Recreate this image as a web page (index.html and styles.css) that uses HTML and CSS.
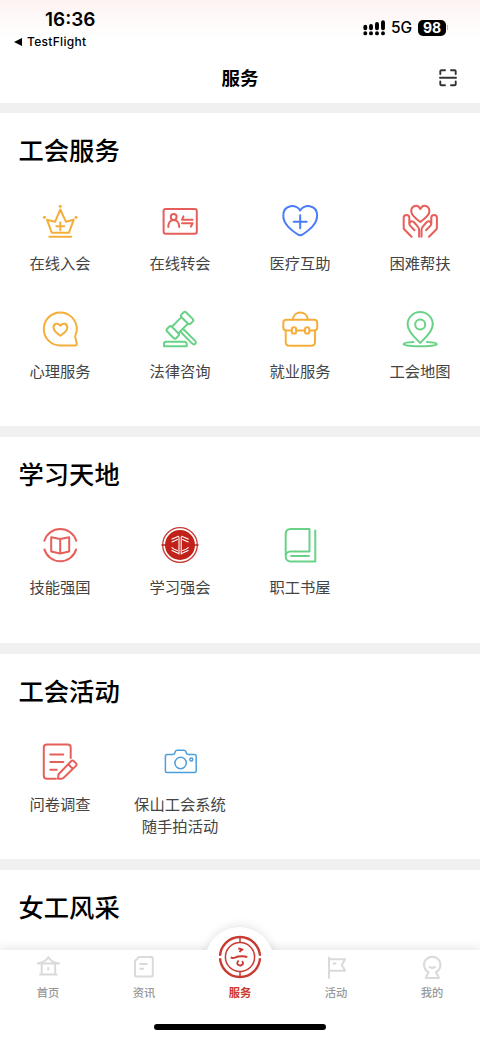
FILE: index.html
```html
<!DOCTYPE html>
<html lang="zh-CN">
<head>
<meta charset="utf-8">
<title>服务</title>
<link rel="stylesheet" href="styles.css">
</head>
<body>
<div class="app">
  <header class="top">
    <div class="status">
      <div class="status-left">
        <div class="clock">16:36</div>
        <div class="back"><svg width="9" height="8" viewBox="0 0 9 8"><path d="M0 4 8 0V8Z"/></svg><span>TestFlight</span></div>
      </div>
      <div class="status-right">
        <svg class="signal" width="24" height="16" viewBox="0 0 24 16" stroke="#000" stroke-width="3.9" stroke-linecap="round"><path d="M2.300 6.700v1.600M8 5.900v2.400M14 3.900v4.400M20 2.300v6M2.300 13.200v.2M8 13.200v.2M14 13.200v.2M20 13.200v.2"/></svg>
        <span class="network">5G</span>
        <span class="battery">98</span><span class="battery-tip"></span>
      </div>
    </div>
    <div class="titlebar">
      <h1>服务</h1>
      <svg class="scan" width="18" height="18" viewBox="0 0 18 18" fill="none" stroke="#333" stroke-width="1.9" stroke-linecap="round" stroke-linejoin="round"><path d="M1.300 5V2.300q0-1 1-1H6M12 1.300h3.700q1 0 1 1V5M1.300 12.500v2.700q0 1 1 1H6M12 16.200h3.700q1 0 1-1v-2.700M1 8.700h16"/></svg>
    </div>
  </header>
  <main class="content">
    <section class="panel">
      <h2>工会服务</h2>
      <div class="grid">
        <div class="item">
          <svg class="icon orange" viewBox="0 0 44 44"><path d="M9 20.700 13.700 33.700H31L35.700 20.700 28 22.800 22.300 10.500 17 22.800ZM11.300 37.700H33.200M22.300 23.300v8M18.300 27.300h8"/><g class="solid"><circle cx="22.300" cy="7.300" r="1.500"/><circle cx="6.400" cy="18.300" r="1.500"/><circle cx="38" cy="18.300" r="1.500"/></g></svg>
          <span>在线入会</span>
        </div>
        <div class="item">
          <svg class="icon red" viewBox="0 0 44 44"><rect x="5.600" y="10" width="33.200" height="24.700" rx="2"/><circle cx="15.700" cy="18" r="2.900"/><path d="M10.300 28c0-4.200 2.200-7 5.400-7s5.500 2.800 5.500 7M34.600 20.700H24l1.500-3.300M24 24.300h10.600l-1.700 3.200"/></svg>
          <span>在线转会</span>
        </div>
        <div class="item">
          <svg class="icon blue" viewBox="0 0 44 44"><path d="M22.200 11.500C19 4.800 5.300 5 5.300 16.800c0 8.500 8 14.200 14.200 18.500q2.700 2 5.400 0C31.100 31 39.100 25.300 39.100 16.800 39.100 5 25.400 4.800 22.200 11.500ZM22.200 16.200v13M15.700 22.700h13"/></svg>
          <span>医疗互助</span>
        </div>
        <div class="item">
          <svg class="icon red" viewBox="0 0 44 44"><path d="M22.300 10C19.800 4.600 13.200 6.600 13.200 12.300c0 4.500 4.700 7.300 9.100 10.600 4.400-3.300 9.100-6.100 9.100-10.600 0-5.700-6.600-7.700-9.100-2.300Z"/><path id="hand" d="M13.600 37.800 6.400 30.500q-.7-.7-.7-1.800V18.500c0-3.500 5.600-3.500 5.600 0v6.200q0 1 .8 1.900l4.400 4.700M11.500 24.300c1-2.600 3-2.600 4.800-.8l3.700 4.400q1.100 1.200 1.100 2.900v7"/><use href="#hand" transform="matrix(-1 0 0 1 44.600 0)"/></svg>
          <span>困难帮扶</span>
        </div>
        <div class="item">
          <svg class="icon orange" viewBox="0 0 44 44"><path d="M22.200 38.500A16.500 16.500 0 1 1 38.800 22q0 3-1.300 6-.8 2 .2 4.200l1 4q.5 2.300-1.800 2.300ZM22.400 18.800c-1.900-3.400-6.900-2.400-6.900 1.700 0 3.300 3.700 6.100 6.900 8.300 3.200-2.200 6.900-5 6.900-8.300 0-4.100-5-5.100-6.900-1.700Z"/></svg>
          <span>心理服务</span>
        </div>
        <div class="item">
          <svg class="icon green" viewBox="0 0 44 44"><path d="M6 39.200v-2.200q0-2.300 2.300-2.300H26q2.300 0 2.700 2.300v2.200Z"/><g transform="translate(21.900 18.200) rotate(-45)"><rect x="-13.500" y="-6.500" width="6.700" height="13" rx="2"/><rect x="6.800" y="-6.500" width="6.700" height="13" rx="2"/><path d="M-6.800-4.600H6.800M-6.800 4.600H6.800"/></g><path d="M25.500 22.200 36.900 33.600c2.500 2.500-.6 5-2.800 2.800L22.700 25"/></svg>
          <span>法律咨询</span>
        </div>
        <div class="item">
          <svg class="icon orange" viewBox="0 0 44 44"><path d="M14.700 12.600C16 3 28.700 3 30 12.600"/><path d="M13.700 23.500H8.500q-3.200 0-3.200-3v-4.700q0-3.100 3.200-3.100H36q3.200 0 3.200 3.100v4.700q0 3-3.200 3h-4.400M18.300 23.500H27M7.700 23.500V35q0 3.700 3.700 3.700h21.900q3.700 0 3.700-3.700V23.500"/><rect x="13.800" y="20.200" width="4.400" height="6.400" rx="2.200"/><rect x="27" y="20.200" width="4.400" height="6.400" rx="2.200"/></svg>
          <span>就业服务</span>
        </div>
        <div class="item">
          <svg class="icon green" viewBox="0 0 44 44"><path d="M22.200 36C19 32 9.600 25.800 9.600 17.300a12.600 12.300 0 0 1 25.200 0C34.800 25.800 25.400 32 22.200 36Z"/><circle cx="22.200" cy="17.600" r="5"/><path d="M15.500 34.900C9.500 35.200 5.600 36 5.600 37.100c0 3 33.200 3 33.200 0 0-1.100-3.900-1.900-9.900-2.200"/></svg>
          <span>工会地图</span>
        </div>
      </div>
    </section>
    <section class="panel study">
      <h2>学习天地</h2>
      <div class="grid">
        <div class="item">
          <svg class="icon red" viewBox="0 0 44 44"><path d="M6.400 17.800a16.600 16.600 0 0 1 31.800 0M6.400 26.400a16.600 16.600 0 0 0 31.800 0M22.200 16 13.200 14.300V28.500l9 2 9-2V14.300ZM22.200 16v14.500"/></svg>
          <span>技能强国</span>
        </div>
        <div class="item">
          <svg class="icon" viewBox="0 0 44 44"><circle cx="22" cy="22" r="17.300" stroke="#c63b33" stroke-width="1.300"/><circle class="disc" cx="22" cy="22" r="15"/><path d="M4 22h36" stroke="#c02118" stroke-width="1.500"/><g stroke="#fff" stroke-width="1.100"><path d="M21 14v17M23.200 14v17"/><path id="wing" d="M20.500 13.200 14 16.100M19.500 16.500 14 18.900M14 24.600q2 2 5.500 2.900M14 27.600 20.500 30.500"/><use href="#wing" transform="matrix(-1 0 0 1 44.200 0)"/></g></svg>
          <span>学习强会</span>
        </div>
        <div class="item">
          <svg class="icon green" viewBox="0 0 44 44"><path d="M7.700 33V11q0-5 5-5H31.500V28.400H12.500c-6.400 0-6.400 10.100 0 10.100H37.300V7.500M13.200 33.100H31"/></svg>
          <span>职工书屋</span>
        </div>
      </div>
    </section>
    <section class="panel">
      <h2>工会活动</h2>
      <div class="grid">
        <div class="item">
          <svg class="icon red" viewBox="0 0 44 44"><path d="M32.700 18V7.500q0-3-3-3H8.800q-3 0-3 3V35.800q0 3 3 3H18M12.300 14.400h13M12.300 22h13M12.300 29.700h6.500M20 38.800l.5-4.500 12.600-13.100q1.400-1.400 2.800 0l2 1.900q1.400 1.400 0 2.800L25.700 37.700q-.8.900-2.200 1ZM30.200 24.300l4.600 4.600"/></svg>
          <span>问卷调查</span>
        </div>
        <div class="item">
          <svg class="icon sky" viewBox="0 0 44 44"><path d="M9 14.500h5.800q1.500 0 1.900-1.300l.6-1.600q.5-1.300 1.900-1.300h6.700q1.400 0 1.900 1.300l.6 1.600q.4 1.300 1.900 1.300h6.300q1.600 0 1.600 1.600v15q0 1.500-1.600 1.500H9q-1.600 0-1.600-1.500v-15q0-1.600 1.600-1.600Z"/><circle cx="22.600" cy="23" r="5.700"/><circle cx="33.300" cy="19.400" r="1.500"/></svg>
          <span>保山工会系统<br>随手拍活动</span>
        </div>
      </div>
    </section>
    <section class="panel">
      <h2>女工风采</h2>
    </section>
  </main>
  <nav class="tabs">
    <div class="tab"><svg viewBox="0 0 28 28"><path d="M3.700 10.500Q11 9.500 14.300 4.200 17.500 9.500 25 10.500ZM7.700 11v10.300M21.200 11v10.300M5.300 21.400H23.500M14.300 14.200v3"/></svg><span>首页</span></div>
    <div class="tab"><svg viewBox="0 0 28 28"><path d="M9 4h12.300q1.500 0 1.500 1.500v16.600q0 1.500-1.500 1.500H6.500Q5 23.600 5 22.100V8ZM9.400 11.100h8M9.400 15.700h4.500"/></svg><span>资讯</span></div>
    <div class="tab active">
      <svg class="emblem" viewBox="0 0 44 44"><circle cx="22" cy="22" r="20" stroke-width="2.400"/><circle cx="22" cy="22" r="14.600" stroke-width="1.500"/><path d="M22 2v5.500M22 36.500V42" stroke-width="1.500"/><path class="gap" d="M0 22h4M40 22h4"/><path d="M20.200 13.500q2.500.2 4.300 1.100-2 .6-3 2.300M12.800 22.200c2.500 2.300 4.500-.3 7.500-.7s6.500-.5 9 .6M20.500 25.500c-4.300 5.200 3.700 6.300 4.500 3.300q.2-1.500-.9-2.700" stroke-width="1.900"/></svg>
      <span>服务</span>
    </div>
    <div class="tab"><svg viewBox="0 0 28 28"><path d="M7 3.700v22M7 6.200H23.200L19.700 12l3.500 5.700H7M10.800 10.400h3.500"/></svg><span>活动</span></div>
    <div class="tab"><svg viewBox="0 0 28 28"><path d="M10.500 19.200a8.200 8.200 0 1 1 7.500 0L21 24.900H7.800ZM11 13.600q3.300 2.700 6.600 0"/></svg><span>我的</span></div>
    <div class="home-bar"></div>
  </nav>
</div>
</body>
</html>
```
FILE: styles.css
```css
* { box-sizing: border-box; }
body { margin: 0; background: #fff; font-family: "Noto Sans CJK SC", sans-serif; color: #000; }
.app { width: 480px; height: 1039px; display: flex; flex-direction: column; overflow: hidden; }
h1, h2 { margin: 0; font-weight: 500; }

.top { height: 103px; flex: none; background: linear-gradient(#fdf3f2 0, #fff 38px); }
.status { height: 53px; display: flex; justify-content: space-between; font-family: Inter, sans-serif; }
.status-left { padding: 9px 0 0 14px; }
.clock { padding-left: 31px; font-size: 19px; line-height: 22px; font-weight: 600; }
.back { display: flex; align-items: center; gap: 4px; margin-top: 2px; font-size: 12px; line-height: 18px; font-weight: 500; letter-spacing: .3px; }
.status-right { display: flex; align-items: center; height: 17px; margin: 19px 32px 0 0; }
.network { margin-left: 4px; width: 27px; font-size: 15.500px; font-weight: 500; }
.battery { width: 28px; height: 16px; border-radius: 5px; background: #000; color: #fff; font-size: 14px; line-height: 16px; font-weight: 700; text-align: center; }
.battery-tip { width: 1px; height: 5px; margin-left: 1px; background: #bbb; }
.titlebar { height: 50px; display: grid; grid-template-columns: 1fr auto 1fr; align-items: center; }
.titlebar h1 { grid-column: 2; font-size: 18.500px; line-height: 48px; height: 50px; font-weight: 700; }
.scan { justify-self: end; margin-right: 23px; }

.content { flex: 1; min-height: 0; overflow: hidden; }
.panel { border-top: 11px solid #f0f0f0; padding-bottom: 21px; }
.panel:first-child { border-top-width: 10px; }
.study { padding-bottom: 22px; }
.panel h2 { height: 76px; padding-left: 18.500px; font-size: 25.300px; line-height: 73px; }
.grid { display: grid; grid-template-columns: repeat(4, 120px); }
.item { height: 108px; padding-top: 10px; display: flex; flex-direction: column; align-items: center; gap: 9px; font-size: 15.300px; line-height: 21.500px; text-align: center; color: #444; white-space: nowrap; }
.icon { width: 44px; height: 44px; flex: none; fill: none; stroke-width: 2; stroke-linecap: round; stroke-linejoin: round; }
.orange { stroke: #f5ae3a; }
.orange .solid { fill: #f5ae3a; stroke: none; }
.red { stroke: #e75f5a; }
.blue { stroke: #4a7cfa; }
.green { stroke: #68d286; }
.sky { stroke: #4d9fdc; stroke-width: 1.500; }
.disc { fill: #c02118; }

.tabs { position: relative; z-index: 1; flex: none; height: 89px; padding-top: 3px; background: #fff; display: grid; grid-template-columns: repeat(5, 96px); grid-template-rows: 71px 6px; box-shadow: 0 -2px 10px rgba(0, 0, 0, .1); }
.tabs::before { content: ""; position: absolute; left: 205px; top: -23px; width: 69px; height: 69px; border-radius: 50%; background: #fff; box-shadow: 0 -2px 10px rgba(0, 0, 0, .1); }
.tabs::after { content: ""; position: absolute; left: 180px; top: 0; width: 120px; height: 70px; background: #fff; }
.tab { position: relative; z-index: 1; display: flex; flex-direction: column; align-items: center; justify-content: flex-start; font-size: 11.300px; line-height: 16px; font-weight: 500; color: #999; }
.tab svg { width: 28px; height: 28px; margin-bottom: 2.500px; fill: none; stroke: #dadada; stroke-width: 2; stroke-linejoin: round; }
.tab.active { color: #c93a32; font-weight: 700; }
.tab svg.emblem { width: 44px; height: 44px; margin: -18px 0 4.500px; stroke: #c93a32; }
.tab svg.emblem .gap { stroke: #fff; stroke-width: 2.500; }
.home-bar { grid-column: 1 / -1; justify-self: center; width: 172px; height: 6px; border-radius: 3px; background: #000; }
```
